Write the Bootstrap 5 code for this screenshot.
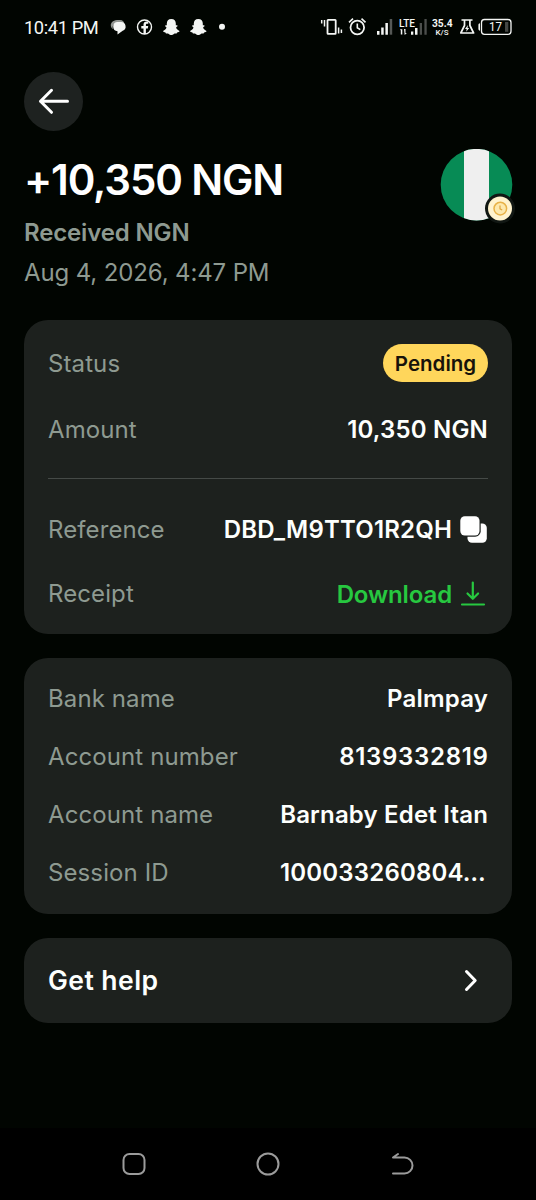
<!DOCTYPE html>
<html lang="en" data-bs-theme="dark">
<head>
<meta charset="utf-8">
<meta name="viewport" content="width=device-width, initial-scale=1">
<title>Transaction details</title>
<link href="https://cdn.jsdelivr.net/npm/bootstrap@5.3.0/dist/css/bootstrap.min.css" rel="stylesheet">
<style>
  body { background: #010501; color: #fdfffd; font-family: Inter, "Liberation Sans", sans-serif; font-size: 24px; line-height: 34px; }
  svg { display: block; flex: none; }
  .screen { height: 1200px; overflow: hidden; }
  .status-bar { height: 54px; padding: 0 24px; font-family: Roboto, sans-serif; color: #f4f6f4; }
  .clock { font-size: 18.3px; width: 86px; line-height: 54px; letter-spacing: -.4px; padding-top: 1px; }
  .back-btn { width: 59px; height: 59px; margin-top: 18px; background: #1e2220; border: 0; }
  .summary { margin-top: 25px; height: 134px; }
  .headline { font-size: 42px; font-weight: 600; line-height: 48px; letter-spacing: -1.15px; margin: 0; }
  .kind { margin-top: 12px; letter-spacing: -.15px; }
  .date { margin-top: 6px; letter-spacing: -.13px; }
  .muted { color: #8e9a91; }
  .flag { width: 76px; height: 76px; margin-top: -7px; margin-right: -4px; }
  .panel { background: #1d211e; border: 0; border-radius: 24px; padding: 24px; }
  .rowline { height: 34px; white-space: nowrap; }
  .row-status { height: 38px; }
  .row-gap { margin-top: 30px; }
  .rowline dt { font-weight: 400; color: #8e9a91; letter-spacing: .1px; padding-top: 1px; }
  .rowline dd { margin: 0; font-weight: 600; letter-spacing: .18px; padding-top: 2px; }
  .bank .rowline dt, .bank .rowline dd { padding-top: 0; }
  .rowline dd.pill { background: #ffd65b; color: #17120a; font-size: 20.5px; line-height: 38px; height: 38px; width: 105px; font-weight: 600; padding: 1px 0 0; letter-spacing: 0; border-radius: 19px; }
  .rowline dd.digits { letter-spacing: .7px; margin-right: -.7px; }
  .rule { height: 1px; background: #454a47; margin: 32px 0 33px; }
  .download { color: #27c840; text-decoration: none; letter-spacing: -.12px; }
  .download span { padding-top: 2px; }
  .session { width: 208px; }
  .help { height: 85px; padding: 0 24px; color: inherit; font-size: 26.5px; font-weight: 600; letter-spacing: .45px; }
  .help span { padding-bottom: 2px; }
  .system-nav { height: 72px; background: #000; padding: 0 121px; }
</style>
</head>
<body>
<div class="screen d-flex flex-column">
  <header class="status-bar d-flex align-items-center">
    <span class="clock">10:41 PM</span>
    <svg width="120" height="54" viewBox="110 0 120 54" fill="#f4f6f4">
      <path d="M113 29c-3-1-4-8 4-9h3c3 0 4 2 4 3h-6c-5 0-6 4-5 6z" fill="#929692"/>
      <path d="M117 22h4a4.500 4.500 0 0 1 1.700 8.700L117.500 34.500v-3.200a4.700 4.700 0 0 1-.5-9.300z"/>
      <circle cx="144.500" cy="27" r="7" fill="none" stroke="#f4f6f4" stroke-width="1.400"/>
      <path d="M143.500 34v-5.500h-2.200V26h2.200v-1.500c0-2 1.300-3 3-3h1.800v2.300H147c-.8 0-1.100.4-1.100 1.100V26h2.300l-.4 2.500h-1.900V34z"/>
      <g id="ghost"><path d="M171.300 19c3 0 4.500 2 4.500 4.400v1.900c.6.200 1.700-.2 1.700.6 0 .7-1.400 1-1.400 1.700.5 1.800 1.800 2.700 3.400 3.300 0 1.200-1.500 1-2.300 1.500-.4.300-.1.900-.7 1-1 .1-1.800-.2-2.700.5-.8.700-1.500 1.200-2.500 1.200s-1.700-.5-2.500-1.200c-.9-.7-1.700-.4-2.700-.5-.6-.1-.3-.7-.7-1-.8-.5-2.300-.3-2.300-1.500 1.600-.6 2.900-1.500 3.400-3.300 0-.7-1.400-1-1.400-1.700 0-.8 1.100-.4 1.700-.6v-1.900c0-2.400 1.500-4.400 4.500-4.400z"/></g>
      <use href="#ghost" x="27"/>
      <circle cx="222" cy="26.800" r="3"/>
    </svg>
    <svg class="ms-auto" width="192" height="54" viewBox="320 0 192 54" fill="#f4f6f4" font-family="Roboto, sans-serif">
      <g fill="none" stroke="#f4f6f4" stroke-width="1.800">
        <rect x="327.500" y="19.900" width="8.200" height="14" rx=".6"/>
        <path d="M324.500 20v6.500M321.700 20v3.500M338.600 27.500v6M341.400 29.500v3.500" stroke-width="1.500"/>
        <circle cx="357.300" cy="27.500" r="6.800"/>
        <path d="M357.300 23.500v4.300l3 1.800M349 22.300l4-3.700M361.500 18.600l4 3.700" stroke-width="1.600"/>
      </g>
      <path d="M377 31h2.500v3.700H377zM381.200 27.500h2.500v7.200h-2.500zM385.400 23h2.500v11.700h-2.500z"/>
      <path d="M389.700 19h2.500v15.700h-2.500z" fill="#555855"/>
      <text x="399" y="27" font-size="11" font-weight="500" textLength="16" lengthAdjust="spacingAndGlyphs">LTE</text>
      <path d="M400 29.300h2.300v5.200h-1.500v-4zM404 29h1.500v4h1.400l-2.200 2z M411 31.500h2.300v3.200H411zM415 28h2.500v6.700H415z"/>
      <path d="M419.700 23h2.300v11.700h-2.300zM424.400 19h2.300v15.700h-2.300z" fill="#4c4f4c"/>
      <text x="432" y="27.100" font-size="11" font-weight="700" textLength="20.500" lengthAdjust="spacingAndGlyphs">35.4</text>
      <text x="435.500" y="35.200" font-size="8" font-weight="500" textLength="13" lengthAdjust="spacingAndGlyphs">K/S</text>
      <path d="M461.500 20h11M464.500 20v5.500L460.800 33h12.800l-3.700-7.500V20" fill="none" stroke="#f4f6f4" stroke-width="1.700" stroke-linejoin="round"/>
      <path d="M468 25l-3 4h1.700l-.5 2.800 3-3.900h-1.700z"/>
      <rect x="481.500" y="19.500" width="29.500" height="14.800" rx="3" fill="none" stroke="#f4f6f4" stroke-width="1.300"/>
      <path d="M480 23.300v7.500c-1-.2-1.600-.8-1.600-1.700V25c0-.9.600-1.500 1.600-1.700z"/>
      <path d="M505 22h3.300v9.800H505z" fill="#444744"/>
      <text x="489" y="31.400" font-size="12.500" textLength="13" lengthAdjust="spacingAndGlyphs">17</text>
    </svg>
  </header>

  <main class="flex-grow-1 px-4">
    <button class="back-btn rounded-circle d-flex align-items-center justify-content-center p-0" aria-label="Back">
      <svg width="32" height="28" viewBox="0 0 32 28" fill="none" stroke="#fff" stroke-width="3" stroke-linecap="round" stroke-linejoin="round"><path d="M29.500 13.300H2.500M13.500 2.300l-11 11 11 11"/></svg>
    </button>

    <section class="summary d-flex justify-content-between">
      <div>
        <h1 class="headline">+10,350 NGN</h1>
        <div class="muted fw-semibold kind">Received NGN</div>
        <div class="muted date">Aug 4, 2026, 4:47 PM</div>
      </div>
      <svg class="flag" viewBox="440 149 76 76">
        <clipPath id="disc"><circle cx="476.500" cy="184.700" r="35.800"/></clipPath>
        <g clip-path="url(#disc)"><path fill="#078b55" d="M440 148h76v76h-76z"/><path fill="#efefef" d="M464 148h25v76h-25z"/></g>
        <circle cx="500" cy="208.500" r="15" fill="#111713"/>
        <circle cx="500" cy="208.500" r="12" fill="#fff3ce"/>
        <circle cx="500.300" cy="208.600" r="6.300" fill="#fde9ad" stroke="#e8b248" stroke-width="1.500"/>
        <path d="M500 205.500v3.300l2.200 1.200" fill="none" stroke="#dfa53e" stroke-width="1.200"/>
      </svg>
    </section>

    <dl class="card panel row-gap mb-0">
      <div class="rowline row-status d-flex justify-content-between align-items-center"><dt>Status</dt><dd class="badge pill">Pending</dd></div>
      <div class="rowline row-gap d-flex justify-content-between align-items-center"><dt>Amount</dt><dd>10,350 NGN</dd></div>
      <div class="rule"></div>
      <div class="rowline d-flex justify-content-between align-items-center"><dt>Reference</dt>
        <dd class="d-flex align-items-center"><span>DBD_M9TTO1R2QH</span>
          <svg class="ms-2" width="28" height="28" viewBox="0 0 28 28" fill="#fff"><rect x="7.500" y="7.500" width="19.300" height="19.300" rx="4.500"/><rect x="-.7" y="-.7" width="21.400" height="21.400" rx="5.500" fill="#1d211e"/><rect x=".3" y=".3" width="19.200" height="19.200" rx="4.500"/></svg>
        </dd></div>
      <div class="rowline row-gap d-flex justify-content-between align-items-center"><dt>Receipt</dt>
        <dd><a href="#" class="download d-flex align-items-center"><span>Download</span>
          <svg class="ms-2" width="28" height="28" viewBox="0 0 28 28" fill="none" stroke="#27c840" stroke-width="2.200" stroke-linecap="round" stroke-linejoin="round"><path d="M12.800 2.500v16M7.500 13.500l5.300 5.300 5.300-5.300M2 24.500h22"/></svg></a></dd></div>
    </dl>

    <dl class="card panel bank gap-4 mt-4 mb-0">
      <div class="rowline d-flex justify-content-between align-items-center"><dt>Bank name</dt><dd>Palmpay</dd></div>
      <div class="rowline d-flex justify-content-between align-items-center"><dt>Account number</dt><dd class="digits">8139332819</dd></div>
      <div class="rowline d-flex justify-content-between align-items-center"><dt>Account name</dt><dd>Barnaby Edet Itan</dd></div>
      <div class="rowline d-flex justify-content-between align-items-center"><dt>Session ID</dt><dd class="session">100033260804…</dd></div>
    </dl>

    <a href="#" class="card panel help flex-row align-items-center justify-content-between mt-4 text-decoration-none">
      <span>Get help</span>
      <svg width="28" height="28" viewBox="0 0 28 28" fill="none" stroke="#fff" stroke-width="3" stroke-linecap="round" stroke-linejoin="round"><path d="M6.500 4.500 15.200 13.500l-8.700 9"/></svg>
    </a>
  </main>

  <nav class="system-nav d-flex justify-content-between align-items-center" aria-label="System">
    <svg width="26" height="26" viewBox="0 0 26 26" fill="none" stroke="#9b9b9b" stroke-width="2"><rect x="2.500" y="3" width="21" height="20" rx="6"/></svg>
    <svg width="26" height="26" viewBox="0 0 26 26" fill="none" stroke="#9b9b9b" stroke-width="2"><circle cx="13" cy="13" r="10.500"/></svg>
    <svg width="26" height="26" viewBox="0 0 26 26" fill="none" stroke="#9b9b9b" stroke-width="2" stroke-linecap="round" stroke-linejoin="round"><path d="M4 22.500h11.500a8 8 0 0 0 0-16H4l5-3.500"/></svg>
  </nav>
</div>
<script src="https://cdn.jsdelivr.net/npm/bootstrap@5.3.0/dist/js/bootstrap.bundle.min.js"></script>
</body>
</html>
